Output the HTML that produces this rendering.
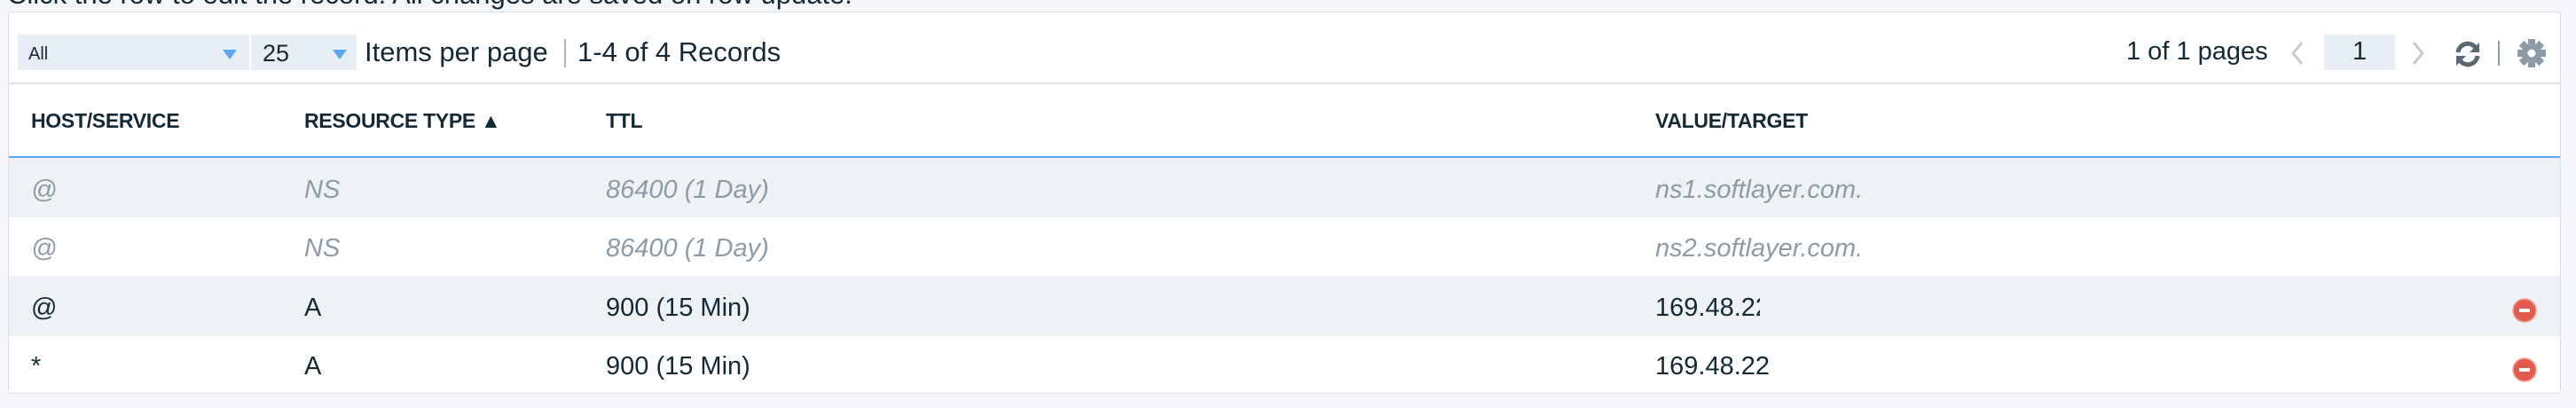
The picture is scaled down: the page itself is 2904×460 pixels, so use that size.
<!DOCTYPE html>
<html><head><style>
body{margin:0;width:2904px;height:460px;background:#f4f6f9;font-family:"Liberation Sans",sans-serif;color:#152935;position:relative;overflow:hidden}
.a{position:absolute;white-space:nowrap}
.top{left:8px;top:-24px;font-size:31px;color:#152935}
.panel{position:absolute;left:9px;top:13px;width:2876px;height:429px;background:#fff;border:1px solid #dfe3e6}
.sel{background:#e8eef5;height:40px;top:39px}
.tri{width:0;height:0;border-left:8px solid transparent;border-right:8px solid transparent;border-top:11px solid #5aa7f4}
.t{font-size:31px;top:41px}
.t2{font-size:29px;top:42px}
.h{font-size:23px;font-weight:bold;top:123px;letter-spacing:-0.3px}
.row{position:absolute;left:10px;width:2876px;height:66px}
.c{font-size:29px}
.g{color:#8c9ba5;font-style:italic}
</style></head><body>
<div class="a top">Click the row to edit the record. All changes are saved on row update.</div>
<div class="panel"></div>
<div class="a" style="left:10px;top:93px;width:2876px;height:2px;background:#dfe3e6"></div>
<div class="a sel" style="left:20px;width:261px"></div>
<div class="a" style="left:32px;top:50px;font-size:20px">All</div>
<div class="a tri" style="left:251px;top:56px"></div>
<div class="a sel" style="left:283px;width:119px"></div>
<div class="a" style="left:296px;top:45px;font-size:27px">25</div>
<div class="a tri" style="left:375px;top:56px"></div>
<div class="a t" style="left:411px">Items per page</div>
<div class="a" style="left:636px;top:44px;width:2px;height:32px;background:#aab4bb"></div>
<div class="a t" style="left:651px">1-4 of 4 Records</div>
<div class="a t2" style="left:2397px">1 of 1 pages</div>
<svg class="a" style="left:2580px;top:45px" width="20" height="30"><path d="M15 3 L5 15 L15 27" fill="none" stroke="#c5ccd1" stroke-width="3"/></svg>
<div class="a sel" style="left:2620px;width:80px"></div>
<div class="a t2" style="left:2652px">1</div>
<svg class="a" style="left:2716px;top:45px" width="20" height="30"><path d="M5 3 L15 15 L5 27" fill="none" stroke="#c5ccd1" stroke-width="3"/></svg>
<svg class="a" style="left:2766px;top:45px" width="32" height="32" viewBox="0 0 32 32"><path d="M5 14 A11 11 0 0 1 25 9" fill="none" stroke="#5a6872" stroke-width="5"/><path d="M29 3 L29 14 L18 14 Z" fill="#5a6872"/><path d="M27 18 A11 11 0 0 1 7 23" fill="none" stroke="#5a6872" stroke-width="5"/><path d="M3 29 L3 18 L14 18 Z" fill="#5a6872"/></svg>
<div class="a" style="left:2816px;top:46px;width:2px;height:28px;background:#8c9ba5"></div>
<svg class="a" style="left:2837px;top:43px" width="34" height="34" viewBox="0 0 34 34"><g fill="#8c9ba5" transform="translate(17 17)"><circle r="11"/><rect x="-4" y="-16" width="8" height="32"/><rect x="-4" y="-16" width="8" height="32" transform="rotate(45)"/><rect x="-4" y="-16" width="8" height="32" transform="rotate(90)"/><rect x="-4" y="-16" width="8" height="32" transform="rotate(135)"/></g><circle cx="17" cy="17" r="4.5" fill="#fff"/></svg>
<div class="a h" style="left:35px">HOST/SERVICE</div>
<div class="a h" style="left:343px">RESOURCE TYPE ▲</div>
<div class="a h" style="left:683px">TTL</div>
<div class="a h" style="left:1866px">VALUE/TARGET</div>
<div class="a" style="left:10px;top:176px;width:2876px;height:2px;background:#5aa7f4"></div>
<div class="row" style="top:178px;height:67px;background:#eef2f5"></div>
<div class="row" style="top:311px;height:68px;background:#eef2f5"></div>
<div class="a c g" style="left:35px;top:198px">@</div><div class="a c g" style="left:343px;top:198px">NS</div><div class="a c g" style="left:683px;top:198px">86400 (1 Day)</div><div class="a c g" style="left:1866px;top:198px">ns1.softlayer.com.</div>
<div class="a c g" style="left:35px;top:264px">@</div><div class="a c g" style="left:343px;top:264px">NS</div><div class="a c g" style="left:683px;top:264px">86400 (1 Day)</div><div class="a c g" style="left:1866px;top:264px">ns2.softlayer.com.</div>
<div class="a c" style="left:35px;top:331px">@</div><div class="a c" style="left:343px;top:331px">A</div><div class="a c" style="left:683px;top:331px">900 (15 Min)</div><div class="a c" style="left:1866px;top:331px;width:118px;overflow:hidden">169.48.22</div>
<div class="a c" style="left:35px;top:397px">*</div><div class="a c" style="left:343px;top:397px">A</div><div class="a c" style="left:683px;top:397px">900 (15 Min)</div><div class="a c" style="left:1866px;top:397px;width:128px;overflow:hidden">169.48.22</div>
<svg class="a" style="left:2832px;top:336px" width="28" height="28"><circle cx="14" cy="14" r="13" fill="#e35b4f" stroke="#f0a29a" stroke-width="1.5"/><rect x="8" y="12" width="12" height="4" fill="#fff"/></svg>
<svg class="a" style="left:2832px;top:403px" width="28" height="28"><circle cx="14" cy="14" r="13" fill="#e35b4f" stroke="#f0a29a" stroke-width="1.5"/><rect x="8" y="12" width="12" height="4" fill="#fff"/></svg>
</body></html>
